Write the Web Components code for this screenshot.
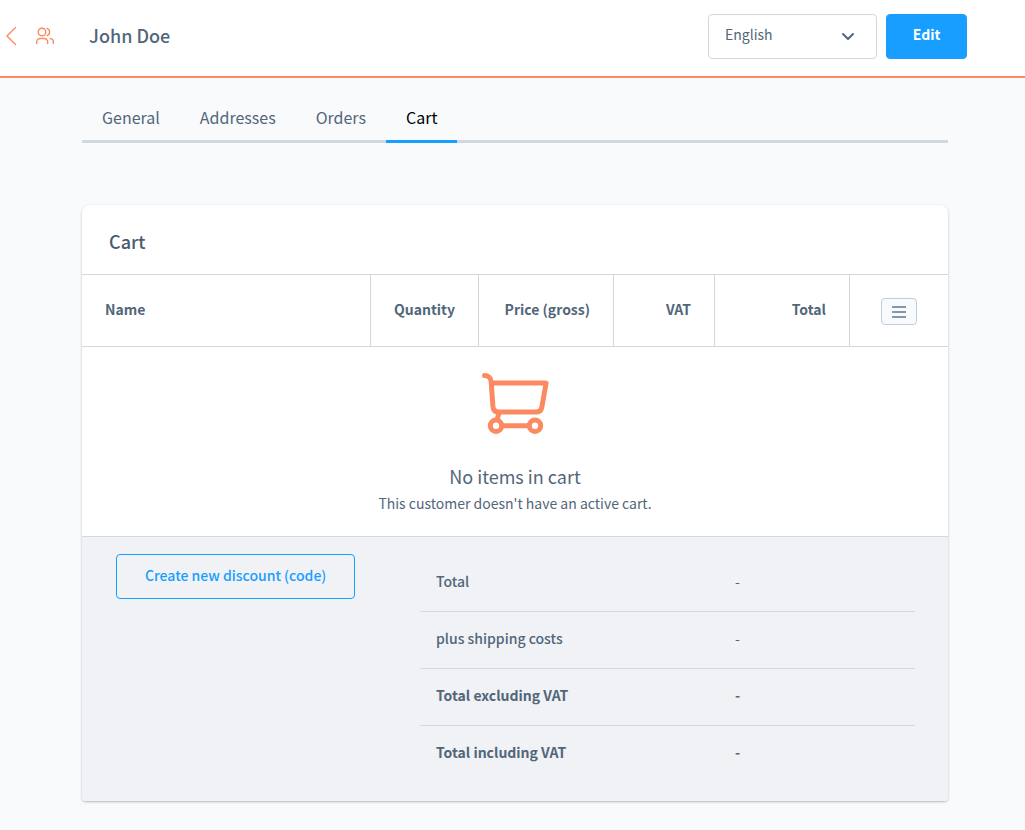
<!DOCTYPE html>
<html lang="en">
<head>
<meta charset="utf-8">
<meta name="viewport" content="width=device-width, initial-scale=1">
<title>John Doe | Cart</title>
<style>
  :root {
    --text: #52667a;
    --heading: #4a5b70;
    --line: #d1d9e0;
    --accent: #fb8a63;
    --primary: #189eff;
    --page: #f9fafc;
    --muted-surface: #f0f2f5;
  }
  body {
    margin: 0;
    min-height: 100vh;
    background: var(--page);
    color: var(--text);
    font: 14px/20px "Noto Sans CJK SC", "Noto Sans", sans-serif;
  }
</style>
</head>
<body>
<customer-page></customer-page>

<script>
const define = (name, html) => {
  const template = document.createElement('template');
  template.innerHTML = '<style>*{box-sizing:border-box}</style>' + html;
  customElements.define(name, class extends HTMLElement {
    constructor() {
      super();
      this.attachShadow({ mode: 'open' }).append(template.content.cloneNode(true));
    }
  });
};

define('page-header', `
  <style>
    :host { display: block; background: #fff; border-bottom: 2px solid var(--accent); }
    header { display: flex; align-items: center; height: 76px; padding: 0 58px 4px 4px; }
    a { display: flex; width: 16px; color: var(--accent); }
    .module { margin-left: 14px; color: var(--accent); }
    h1 { flex: 1; margin: 0 0 0 34px; padding-bottom: 2px; font-size: 18px; line-height: 28px; font-weight: 500; }
    .actions { display: flex; gap: 9px; }
    svg { display: block; fill: none; stroke: currentColor; stroke-linecap: round; stroke-linejoin: round; }
  </style>
  <header>
    <a href="#customers" aria-label="Back">
      <svg width="16" height="20" viewBox="0 0 16 20" stroke-width="1.4"><path d="M11.500 1.500 3 10l8.500 8.500"/></svg>
    </a>
    <svg class="module" width="21" height="20" viewBox="0 0 21 20" stroke-width="1.400" aria-hidden="true">
      <circle cx="8" cy="6" r="3.800"/><path d="M2.700 17.500v-1.500a3.500 3.500 0 0 1 3.500-3.500h4a3.500 3.500 0 0 1 3.500 3.500v1.500M13 2.400a3.800 3.800 0 0 1 0 7.200M16 12.600a3.500 3.500 0 0 1 3.400 3.400v1.500"/>
    </svg>
    <h1><slot></slot></h1>
    <div class="actions"><slot name="actions"></slot></div>
  </header>`);

define('language-select', `
  <style>
    :host { display: grid; align-items: center; width: 169px; }
    select, svg { grid-area: 1 / 1; }
    select { appearance: none; width: 100%; height: 45px; margin: 0; padding: 0 16px 4px; border: 1px solid var(--line);
      border-radius: 4px; background: #fff; color: var(--text); font: inherit; }
    svg { justify-self: end; margin-right: 22px; pointer-events: none; fill: none; stroke: var(--text);
      stroke-width: 2; stroke-linecap: round; stroke-linejoin: round; }
  </style>
  <select aria-label="Language"><option>English</option><option>Deutsch</option></select>
  <svg width="14" height="10" viewBox="0 0 14 10"><path d="m2 3 5 5 5-5"/></svg>`);

define('app-button', `
  <style>
    :host { display: inline-block; }
    button { display: block; min-width: 81px; height: 45px; padding: 0 25px 4px; border: 1px solid var(--primary); border-radius: 4px;
      background: var(--primary); color: #fff; font: inherit; font-weight: 700; white-space: nowrap; }
    :host([outlined]) button { background: transparent; color: var(--primary); font-weight: 500; padding: 0 28px 4px; }
  </style>
  <button type="button"><slot></slot></button>`);

define('tab-link', `
  <style>
    :host { display: block; }
    a { display: block; height: 51px; padding: 13px 20px 0; font-size: 16px; line-height: 24px; color: inherit;
      text-decoration: none; border-bottom: 3px solid transparent; }
    :host([active]) a { color: #000; border-color: var(--primary); }
  </style>
  <a href="#"><slot></slot></a>`);

define('tab-bar', `
  <style>
    :host { display: block; }
    nav { display: flex; box-shadow: inset 0 -3px var(--line); }
  </style>
  <nav><slot></slot></nav>`);

define('content-card', `
  <style>
    :host { display: block; overflow: hidden; background: #fff; border-radius: 8px 8px 4px 4px;
      box-shadow: 0 1px 3px rgba(0,0,0,.2), 0 1px 1px rgba(0,0,0,.08); }
    h2 { margin: 0; padding: 22px 27px 19px; font-size: 18px; line-height: 28px; font-weight: 500; color: var(--heading); }
  </style>
  <h2><slot name="title"></slot></h2>
  <slot></slot>`);

define('cart-items', `
  <style>
    :host { display: block; }
    table { width: 100%; table-layout: fixed; border-collapse: separate; border-spacing: 0; }
    th { height: 73px; padding: 0 23px 3px; border: 1px solid var(--line); border-width: 1px 1px 1px 0; text-align: right;
      font-weight: 700; white-space: nowrap; }
    th:first-child { text-align: left; }
    th:last-child { border-right: 0; padding: 2px 0 0; text-align: center; }
    .number { width: 135px; } .quantity { width: 108px; } .tax { width: 101px; } .tools { width: 98px; }
    button { display: inline-flex; align-items: center; justify-content: center; width: 36px; height: 27px; padding: 0;
      border: 1px solid #c2ccd6; border-radius: 4px; background: var(--page); color: #8498ad; vertical-align: middle; }
    td { padding: 0; border-bottom: 1px solid var(--line); }
    svg { fill: none; stroke: currentColor; stroke-width: 2; }
  </style>
  <table>
    <thead><tr>
      <th scope="col">Name</th><th scope="col" class="quantity">Quantity</th><th scope="col" class="number">Price (gross)</th>
      <th scope="col" class="tax">VAT</th><th scope="col" class="number">Total</th>
      <th class="tools"><button type="button" aria-label="List settings">
        <svg width="14" height="14" viewBox="0 0 14 14"><path d="M0 2h14M0 7h14M0 12h14"/></svg></button></th>
    </tr></thead>
    <tbody><tr><td colspan="6"><slot></slot></td></tr></tbody>
  </table>`);

define('empty-state', `
  <style>
    :host { display: flex; flex-direction: column; align-items: center; padding: 24px 24px 23px; text-align: center; }
    svg { display: block; fill: none; stroke: var(--accent); stroke-width: 5; stroke-linecap: round; stroke-linejoin: round; }
    h3 { margin: 27px 0 3px; font-size: 18px; line-height: 28px; font-weight: 400; }
    p { margin: 0; }
  </style>
  <svg width="70" height="64" viewBox="0 0 70 64" aria-hidden="true">
    <path d="M4.500 4.500c4 0 6.500 2.500 6.700 6.500l1.700 24.500c.3 3.600 2.300 5.400 5.700 5.400h38c3 0 4.700-1.500 5.200-4.500l4.300-24.300H11.300M19 42l-1.500 5M23 54.700h24"/>
    <circle cx="16" cy="54.700" r="5.700"/><circle cx="55" cy="54.700" r="5.700"/>
  </svg>
  <h3><slot name="title"></slot></h3>
  <p><slot></slot></p>`);

define('cart-summary', `
  <style>
    :host { display: grid; grid-template-columns: 1fr minmax(0, 495px); align-items: start; padding: 17px 33px 18px 34px;
      background: var(--muted-surface); }
    table { width: 100%; margin-top: 1px; table-layout: fixed; border-collapse: separate; border-spacing: 0; }
    th, td { height: 57px; padding: 0 16px 5px; text-align: left; font-weight: 500; border-bottom: 1px solid var(--line); }
    td { width: 196px; font-weight: 400; }
    .strong > * { font-weight: 700; }
    tr:last-child > * { border-bottom: 0; }
  </style>
  <div><app-button outlined>Create new discount (code)</app-button></div>
  <table><tbody>
    <tr><th scope="row">Total</th><td>-</td></tr>
    <tr><th scope="row">plus shipping costs</th><td>-</td></tr>
    <tr class="strong"><th scope="row">Total excluding VAT</th><td>-</td></tr>
    <tr class="strong"><th scope="row">Total including VAT</th><td>-</td></tr>
  </tbody></table>`);

define('customer-page', `
  <style>
    :host { display: block; }
    main { padding: 14px 77px 28px 82px; }
    content-card { margin-top: 62px; }
  </style>
  <page-header>John Doe
    <language-select slot="actions"></language-select>
    <app-button slot="actions">Edit</app-button>
  </page-header>
  <main>
    <tab-bar>
      <tab-link>General</tab-link><tab-link>Addresses</tab-link><tab-link>Orders</tab-link><tab-link active>Cart</tab-link>
    </tab-bar>
    <content-card>
      <span slot="title">Cart</span>
      <cart-items>
        <empty-state><span slot="title">No items in cart</span>This customer doesn't have an active cart.</empty-state>
      </cart-items>
      <cart-summary></cart-summary>
    </content-card>
  </main>`);
</script>
</body>
</html>
